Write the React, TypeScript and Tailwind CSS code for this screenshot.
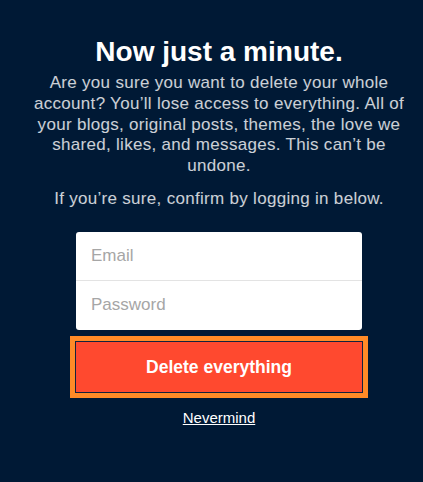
import React from 'react';

export default function App() {
  return (
    <div className="min-h-[482px] w-full bg-[#001935] font-['Liberation_Sans',Arial,sans-serif] flex flex-col items-center pt-[36px] pl-[15px]">
      <h1 className="text-[28px] leading-[32px] font-bold text-white text-center">Now just a minute.</h1>
      <p className="mt-[5px] w-[372px] text-center text-[17px] leading-[20.8px] tracking-[0.3px] text-white/80">
        Are you sure you want to delete your whole account? You’ll lose access to everything. All of your blogs,
        original posts, themes, the love we shared, likes, and messages. This can’t be undone.
      </p>
      <p className="mt-[12px] text-center text-[17px] leading-[20.8px] tracking-[0.3px] text-white/80">
        If you’re sure, confirm by logging in below.
      </p>

      <form className="mt-[22px] flex flex-col items-center" onSubmit={e => e.preventDefault()}>
        <div className="w-[286px] rounded-[3px] bg-white overflow-hidden">
          <input
            type="email"
            placeholder="Email"
            className="block w-full h-[49px] px-[15px] text-[17px] text-gray-800 placeholder:text-[#a6a6a6] outline-none border-b border-[#e3e3e3]"
          />
          <input
            type="password"
            placeholder="Password"
            className="block w-full h-[49px] px-[15px] text-[17px] text-gray-800 placeholder:text-[#a6a6a6] outline-none"
          />
        </div>
        <button
          type="submit"
          className="mt-[11px] w-[288px] h-[52px] border border-[#14223d] bg-[#ff492f] text-white text-[17.5px] font-bold outline-[5px] outline-solid outline-[#ff8a27]"
        >
          Delete everything
        </button>
        <a href="#" className="mt-[14px] text-[15px] text-white underline">Nevermind</a>
      </form>
    </div>
  );
}
